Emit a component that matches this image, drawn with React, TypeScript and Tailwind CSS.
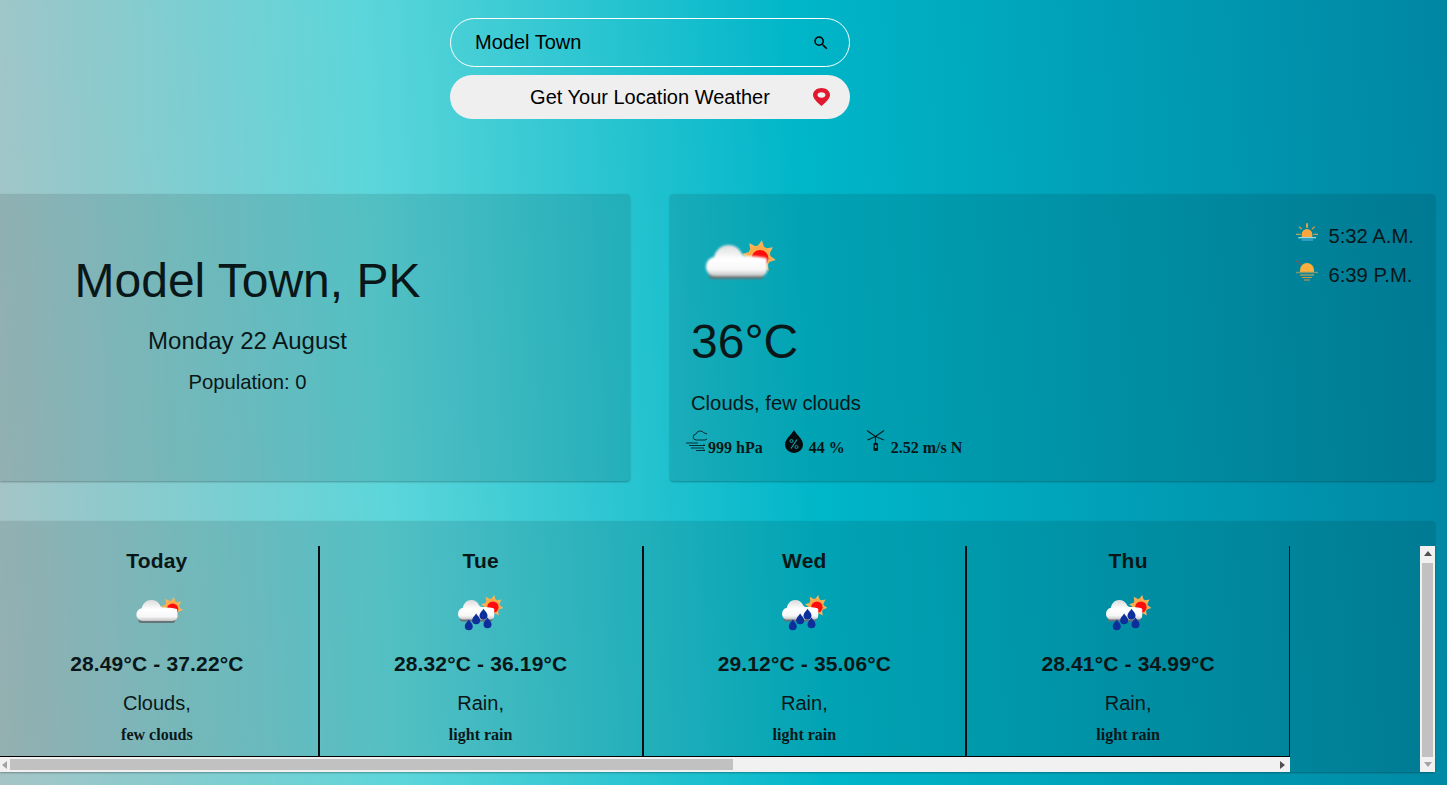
import React from 'react';
import { MdSearch } from 'react-icons/md';

const Sun = ({ cx, cy }: { cx: number; cy: number }) => {
  const rays = [0, 45, 90, 135, 180, 225, 270, 315];
  return (
    <g filter="url(#soft)">
      {rays.map((a) => (
        <polygon
          key={a}
          points={`${cx - 3.5},${cy - 10} ${cx},${cy - 17} ${cx + 3.5},${cy - 10}`}
          fill="#f8b45c"
          transform={`rotate(${a + 10} ${cx} ${cy})`}
        />
      ))}
      <circle cx={cx} cy={cy} r="11.5" fill="#f8ad4a" />
      <circle cx={cx + 1} cy={cy + 1.5} r="8.5" fill="#ff0f0f" />
    </g>
  );
};

const CloudShape = ({ id, x, y, w, h }: { id: string; x: number; y: number; w: number; h: number }) => {
  const s = w / 61;
  const t = h / 33;
  return (
    <g transform={`translate(${x} ${y}) scale(${s} ${t})`} filter={`url(#${id}b)`}>
      <rect x="3" y="25" width="55" height="9" rx="4" fill="#667377" />
      <path
        d="M9 31C3 31 0 26 0 22C0 17 3 13 8 12C10 5 15 0 22 0C29 0 33 3 36 9C38 11 40 11 43 11C47 11 60 12 61 14L61 25C61 29 58 31 54 31Z"
        fill={`url(#${id}g)`}
      />
    </g>
  );
};

const CloudDefs = ({ id }: { id: string }) => (
  <defs>
    <linearGradient id={`${id}g`} x1="0" y1="0" x2="0" y2="1">
      <stop offset="0" stopColor="#dcdcdc" />
      <stop offset="0.45" stopColor="#ffffff" />
      <stop offset="0.8" stopColor="#f7f7f7" />
      <stop offset="1" stopColor="#c4c4c4" />
    </linearGradient>
    <filter id={`${id}b`} x="-10%" y="-10%" width="120%" height="120%">
      <feGaussianBlur stdDeviation="1.1" />
    </filter>
    <filter id="soft" x="-10%" y="-10%" width="120%" height="120%">
      <feGaussianBlur stdDeviation="0.5" />
    </filter>
  </defs>
);

const FewClouds = ({ id, size, box = '0 0 100 100' }: { id: string; size: number; box?: string }) => (
  <svg width={size} height={size} viewBox={box}>
    <CloudDefs id={id} />
    <Sun cx={69} cy={47} />
    <CloudShape id={id} x={16} y={35} w={61} h={33} />
  </svg>
);

const Drop = ({ x, y }: { x: number; y: number }) => (
  <path
    d={`M${x} ${y - 8}C${x + 2} ${y - 4} ${x + 6} ${y - 2} ${x + 6} ${y + 2}A6 6 0 0 1 ${x - 6} ${y + 2}C${x - 6} ${y - 2} ${x - 2} ${y - 4} ${x} ${y - 8}Z`}
    fill="#0d2f9c"
  />
);

const LightRain = ({ id, size }: { id: string; size: number }) => (
  <svg width={size} height={size} viewBox="1.5 0 100 100">
    <CloudDefs id={id} />
    <Sun cx={69} cy={42} />
    <CloudShape id={id} x={18} y={33} w={54} h={31} />
    <Drop x={45} y={61} />
    <Drop x={56} y={54} />
    <Drop x={62} y={67} />
    <Drop x={34} y={70} />
  </svg>
);

const SunriseIcon = () => (
  <svg width="24" height="24" viewBox="0 0 24 24">
    <rect x="11" y="1.3" width="2" height="4.4" fill="#d9a05c" />
    <path d="M4 4.7l2.7 2.3M19.7 4.7L17 7" stroke="#e59a3c" strokeWidth="1.2" />
    <path d="M1 12.3h4.7M18.3 12.3H23" stroke="#e8b04a" strokeWidth="1" />
    <path d="M6.7 15V12.5a5.3 5.5 0 0 1 10.6 0V15Z" fill="#fba63c" />
    <path d="M3.3 15.7H21" stroke="#a6e4f0" strokeWidth="1.2" />
    <path d="M6.7 18H18" stroke="#3fa7d6" strokeWidth="1.4" />
  </svg>
);

const SunsetIcon = () => (
  <svg width="24" height="24" viewBox="0 0 24 24">
    <path d="M1 1l2 1.2 2-1.2M3.5 3.5l1.5 1 1.5-1" stroke="#b54a3a" strokeWidth="0.8" fill="none" />
    <path d="M5 12.4V10a7 7 0 0 1 14 0v2.4Z" fill="#fcae3e" />
    <rect x="1" y="11.8" width="22" height="1.4" fill="#7c9a72" />
    <path d="M5 15h14" stroke="#7c9a72" strokeWidth="1.8" />
    <path d="M7 17.5h10" stroke="#d2953f" strokeWidth="1" />
    <path d="M9 20h6" stroke="#d2953f" strokeWidth="1" />
  </svg>
);

const PressureIcon = () => (
  <svg width="21" height="24" viewBox="0 0 21 24" fill="none" stroke="#0a1f26" strokeWidth="0.9">
    <path d="M10.5 10a3 3 0 0 1-.5-6 4.5 4.5 0 0 1 8-1 3.5 3.5 0 0 1 1 7Z" />
    <path d="M0 13h12M3 15.5h16l-1.5-1.2M5 18h13M10 20.5h9l-1.5-1.2" />
  </svg>
);

const HumidityIcon = () => (
  <svg width="18" height="23" viewBox="0 0 18 23">
    <path d="M9 0C11 4 18 9 18 14.5A9 8.5 0 0 1 0 14.5C0 9 7 4 9 0Z" fill="#060b0d" />
    <path d="M12 9.5l-6 9" stroke="#12a2ad" strokeWidth="1.2" />
    <circle cx="6.5" cy="11" r="1.5" fill="none" stroke="#12a2ad" strokeWidth="1" />
    <circle cx="11.5" cy="17" r="1.5" fill="none" stroke="#12a2ad" strokeWidth="1" />
  </svg>
);

const WindVaneIcon = () => (
  <svg width="19" height="23" viewBox="0 0 19 23">
    <path d="M0 0.5L8.5 6.5L17 0.5M0.5 10L8.5 6.5L17 10M8.5 6.5V13" stroke="#071a20" strokeWidth="1.1" fill="none" />
    <rect x="6.5" y="13" width="4.5" height="8" rx="1" fill="#071a20" />
    <rect x="7.9" y="15" width="1.7" height="3" fill="#12a2ad" />
  </svg>
);

const days = [
  { name: 'Today', temp: '28.49°C - 37.22°C', main: 'Clouds,', desc: 'few clouds' },
  { name: 'Tue', temp: '28.32°C - 36.19°C', main: 'Rain,', desc: 'light rain' },
  { name: 'Wed', temp: '29.12°C - 35.06°C', main: 'Rain,', desc: 'light rain' },
  { name: 'Thu', temp: '28.41°C - 34.99°C', main: 'Rain,', desc: 'light rain' },
];

const App: React.FC = () => {
  return (
    <div className="h-[785px] w-[1447px] overflow-hidden bg-[linear-gradient(87deg,#a6c4c6_0%,#5cd6da_27%,#00b6c9_56%,#0086a2_100%)] pt-[18px] font-['Liberation_Sans',Arial,sans-serif] text-[#0a1719]">
      {/* search */}
      <div className="ml-[450px] flex w-[400px] flex-col gap-2">
        <div className="flex h-[49px] items-center justify-between rounded-full border border-white pb-[2px] pl-6 pr-[19px] text-xl text-black">
          <span>Model Town</span>
          <MdSearch size={18} className="mt-[2px]" />
        </div>
        <div className="relative flex h-[44px] items-center justify-center rounded-full bg-[#efefef] text-xl text-black">
          <span>Get Your Location Weather</span>
          <svg className="absolute right-[20px] top-[13px]" width="17" height="18" viewBox="0 0 17 18">
            <path
              fillRule="evenodd"
              d="M8.5 0C13 0 17 2.8 17 7C17 11 11.5 15.5 8.5 18C5.5 15.5 0 11 0 7C0 2.8 4 0 8.5 0ZM8.5 4.2C6.2 4.2 4.5 5.4 4.5 7C4.5 8.6 6.2 9.8 8.5 9.8C10.8 9.8 12.5 8.6 12.5 7C12.5 5.4 10.8 4.2 8.5 4.2Z"
              fill="#e2182f"
            />
          </svg>
        </div>
      </div>

      {/* current weather */}
      <div className="mt-[75px] flex gap-10 pr-3">
        <div className="flex h-[287px] w-[630px] flex-col items-center rounded-r bg-black/10 pr-[135px] pt-[55px] shadow-[0_1px_2px_rgba(0,0,0,0.3)]">
          <h1 className="text-5xl leading-[64px]">Model Town, PK</h1>
          <p className="mt-[12px] text-2xl leading-8">Monday 22 August</p>
          <p className="mt-[9px] text-[20.25px] leading-8">Population: 0</p>
        </div>
        <div className="relative h-[287px] flex-1 rounded bg-black/10 shadow-[0_1px_2px_rgba(0,0,0,0.3)]">
          <div className="absolute right-[21px] top-[30px] flex flex-col gap-[15px] text-[20.25px]">
            <div className="flex h-6 items-center gap-[9px]">
              <span className="mb-1">
                <SunriseIcon />
              </span>
              <span>5:32 A.M.</span>
            </div>
            <div className="flex h-6 items-center gap-[9px]">
              <span className="mb-[6px]">
                <SunsetIcon />
              </span>
              <span>6:39 P.M.</span>
            </div>
          </div>
          <div className="pl-[20px] pt-[16px]">
            <FewClouds id="main" size={100} />
          </div>
          <div className="pl-[21px]">
            <p className="text-5xl leading-[64px]">36°C</p>
            <p className="mt-[13px] text-[20.25px] leading-8">Clouds, few clouds</p>
          </div>
          <div className="mt-[11px] flex items-start pl-[16px] font-['Liberation_Serif',serif] text-base font-bold">
            <PressureIcon />
            <span className="ml-[1px] mt-[8px] leading-5">999 hPa</span>
            <span className="ml-[22px]">
              <HumidityIcon />
            </span>
            <span className="ml-[6px] mt-[8px] leading-5">44 %</span>
            <span className="ml-[22px]">
              <WindVaneIcon />
            </span>
            <span className="ml-[5px] mt-[8px] leading-5">2.52 m/s N</span>
          </div>
        </div>
      </div>

      {/* forecast */}
      <div className="relative mr-3 mt-10 h-[251px] rounded-r bg-black/10 pt-[25px] shadow-[0_1px_2px_rgba(0,0,0,0.3)]">
        <div className="w-[1290px] overflow-hidden">
          <div className="-ml-[4px] flex h-[211px] w-[1296px] border-b border-black">
            {days.map((d, i) => (
              <div key={d.name} className="flex w-[323.75px] shrink-0 flex-col items-center border-r-2 border-[#050f12]">
                <p className="text-[21px] font-bold leading-[30px] tracking-[0.2px]">{d.name}</p>
                <div className="mt-[2px] h-[67px]">
                  {i === 0 ? <FewClouds id="today" size={67} box="-4 2 100 100" /> : <LightRain id={`rain${i}`} size={67} />}
                </div>
                <p className="mt-[5px] text-[21px] font-bold leading-7 tracking-[0.15px]">{d.temp}</p>
                <p className="mt-[11px] text-xl leading-7">{d.main}</p>
                <p className="mt-[6px] font-['Liberation_Serif',serif] text-base font-bold leading-6">{d.desc}</p>
              </div>
            ))}
          </div>
        </div>

        {/* horizontal scrollbar */}
        <div className="flex h-[15px] w-[1290px] items-center bg-[#f1f1f1]">
          <div className="ml-[2px] h-0 w-0 border-y-[4px] border-r-[5px] border-y-transparent border-r-[#a3a3a3]" />
          <div className="ml-[3px] h-[11px] w-[723px] bg-[#c1c1c1]" />
          <div className="ml-[547px] h-0 w-0 border-y-[4px] border-l-[5px] border-y-transparent border-l-[#505050]" />
        </div>

        {/* vertical scrollbar */}
        <div className="absolute bottom-0 right-0 top-[25px] flex w-[15px] flex-col items-center bg-[#f1f1f1]">
          <div className="mt-[5px] h-0 w-0 border-x-[4px] border-b-[5px] border-x-transparent border-b-[#505050]" />
          <div className="mt-[7px] h-[194px] w-[11px] bg-[#c1c1c1]" />
          <div className="mt-[5px] h-0 w-0 border-x-[4px] border-t-[5px] border-x-transparent border-t-[#a3a3a3]" />
        </div>
      </div>
    </div>
  );
};

export default App;
